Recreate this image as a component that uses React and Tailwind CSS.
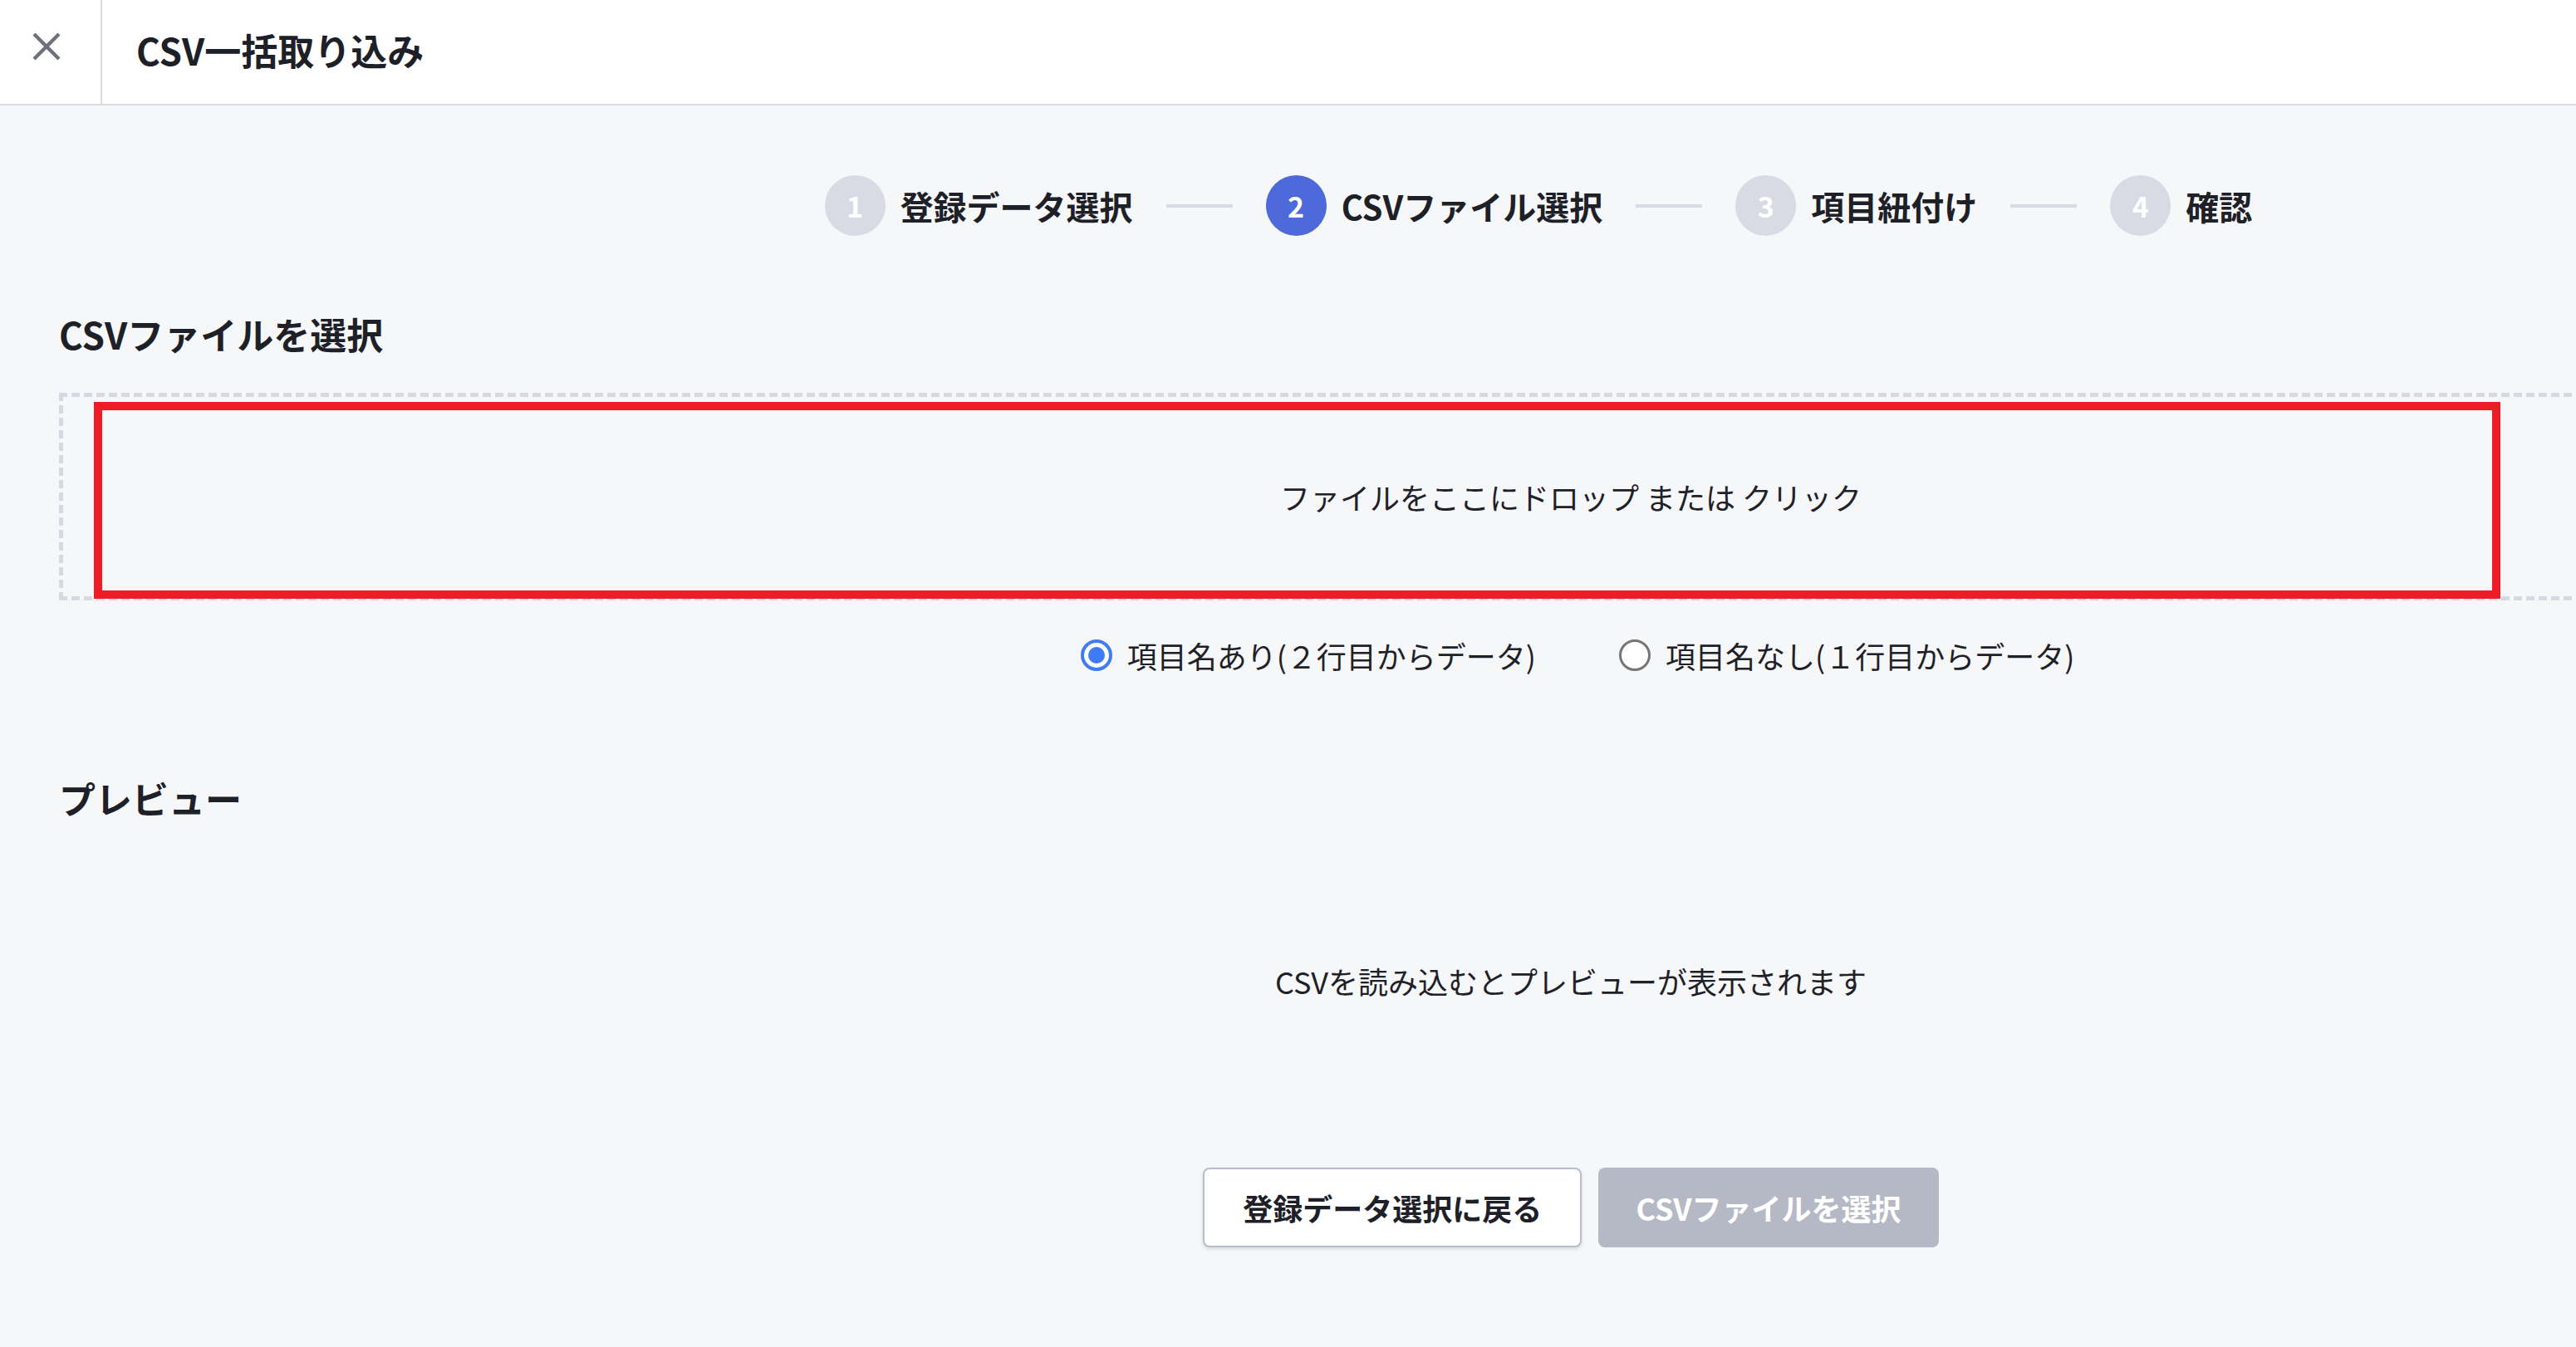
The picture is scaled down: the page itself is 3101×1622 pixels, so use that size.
import React, { useState } from 'react'

const steps = [
    { no: 1, label: '登録データ選択' },
    { no: 2, label: 'CSVファイル選択' },
    { no: 3, label: '項目紐付け' },
    { no: 4, label: '確認' },
]

const current = 2

function Radio({ checked, label, onClick }) {
    return (
        <label onClick={onClick} className="flex items-center gap-[18px] cursor-pointer">
            {checked ? (
                <span className="w-[38px] h-[38px] rounded-full border-[4px] border-[#3f7bf6] bg-white flex items-center justify-center">
                    <span className="w-[20px] h-[20px] rounded-full bg-[#3f7bf6]"></span>
                </span>
            ) : (
                <span className="w-[38px] h-[38px] rounded-full border-[3px] border-[#767676] bg-white"></span>
            )}
            <span className="text-[36px] leading-[40px] text-[#1f2128]">{label}</span>
        </label>
    )
}

const App = () => {

    const [ hasHeader, setHasHeader ] = useState(true)

    return (
        <div className="relative min-h-screen bg-[#f6f7f9] font-['Noto_Sans_CJK_JP','Noto_Sans',sans-serif] text-[#1f2128] overflow-hidden">
            <header className="h-[127px] bg-white border-b-2 border-[#d9dce3] flex">
                <button className="w-[123px] h-full border-r-2 border-[#d9dce3] flex items-start justify-start pl-[38px] pt-[38px]">
                    <svg width="36" height="36" viewBox="0 0 36 36" fill="none" stroke="#6d717c" strokeWidth="4.5">
                        <path d="M3 3 33 33" />
                        <path d="M33 3 3 33" />
                    </svg>
                </button>
                <h1 className="pl-[41px] pb-[6px] flex items-center text-[44px] font-bold text-[#1e2027]">
                    CSV一括取り込み
                </h1>
            </header>

            <div className="w-[3782px] px-[71px]">
                {/* stepper */}
                <div className="mt-[84px] h-[73px] flex items-center justify-center pr-[78px]">
                    {steps.map((step, i) => (
                        <div key={step.no} className="flex items-center">
                            {i > 0 && <div className="w-[80px] h-[4px] bg-[#d8dbe3] mx-[40px]"></div>}
                            <div className={step.no === current
                                ? 'w-[73px] h-[73px] rounded-full bg-[#4e69d9] text-white flex items-center justify-center text-[34px] font-bold'
                                : 'w-[73px] h-[73px] rounded-full bg-[#d8dbe3] text-white flex items-center justify-center text-[34px] font-bold'}>
                                {step.no}
                            </div>
                            <span className="ml-[18px] text-[40px] font-bold text-[#1e2027]">{step.label}</span>
                        </div>
                    ))}
                </div>

                <h2 className="mt-[88px] h-[60px] leading-[60px] text-[44px] font-bold text-[#1e2027]">CSVファイルを選択</h2>

                <div className="mt-[41px] h-[250px] border-[5px] border-dashed border-[#d6d9e1] flex items-center justify-center cursor-pointer">
                    <span className="text-[36px] text-[#1f2128]">ファイルをここにドロップ または クリック</span>
                </div>

                <div className="mt-[46px] h-[40px] flex items-center justify-center gap-[100px] pl-[16px]">
                    <Radio checked={hasHeader} onClick={() => setHasHeader(true)} label="項目名あり(２行目からデータ)" />
                    <Radio checked={!hasHeader} onClick={() => setHasHeader(false)} label="項目名なし(１行目からデータ)" />
                </div>

                <h2 className="mt-[122px] h-[60px] leading-[60px] text-[44px] font-bold text-[#1e2027]">プレビュー</h2>

                <div className="mt-[170px] h-[40px] flex items-center justify-center">
                    <span className="text-[36px] text-[#1f2128]">CSVを読み込むとプレビューが表示されます</span>
                </div>

                <div className="mt-[205px] flex justify-center gap-[20px]">
                    <button className="h-[96px] px-[46px] bg-white border-2 border-[#b9bdc9] rounded-[8px] shadow-[0_2px_4px_rgba(0,0,0,0.12)] text-[36px] font-bold text-[#1e2027]">
                        登録データ選択に戻る
                    </button>
                    <button disabled className="h-[96px] px-[45px] bg-[#b5b9c6] rounded-[8px] text-[36px] font-bold text-white">
                        CSVファイルを選択
                    </button>
                </div>
            </div>

            {/* highlight annotation */}
            <div className="absolute left-[113px] top-[484px] w-[2897px] h-[237px] border-[10px] border-[#ee1c25] pointer-events-none"></div>
        </div>
    )
}

export default App
